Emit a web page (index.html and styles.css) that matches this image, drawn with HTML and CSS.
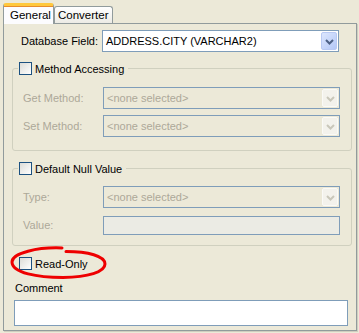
FILE: index.html
```html
<!DOCTYPE html>
<html>
<head>
<meta charset="utf-8">
<link rel="stylesheet" href="styles.css">
</head>
<body>
<div class="tabs">
  <div class="tab active">General</div>
  <div class="tab">Converter</div>
</div>
<div class="panel">
  <div class="row top-row">
    <span class="lbl wide">Database Field:</span>
    <div class="combo">
      <span class="val">ADDRESS.CITY (VARCHAR2)</span>
      <span class="btn"><svg width="9" height="6" viewBox="0 0 9 6"><path d="M1 1 L4.5 4.5 L8 1" fill="none" stroke="#4d6185" stroke-width="2"/></svg></span>
    </div>
  </div>

  <div class="group g1">
    <div class="legend"><span class="chk"></span><span>Method Accessing</span></div>
    <div class="row grow">
      <span class="lbl dis">Get Method:</span>
      <div class="combo disabled">
        <span class="val">&lt;none selected&gt;</span>
        <span class="btn"><svg width="9" height="6" viewBox="0 0 9 6"><path d="M1 1 L4.5 4.5 L8 1" fill="none" stroke="#c9c7ba" stroke-width="2"/></svg></span>
      </div>
    </div>
    <div class="row grow">
      <span class="lbl dis">Set Method:</span>
      <div class="combo disabled">
        <span class="val">&lt;none selected&gt;</span>
        <span class="btn"><svg width="9" height="6" viewBox="0 0 9 6"><path d="M1 1 L4.5 4.5 L8 1" fill="none" stroke="#c9c7ba" stroke-width="2"/></svg></span>
      </div>
    </div>
  </div>

  <div class="group g2">
    <div class="legend"><span class="chk"></span><span>Default Null Value</span></div>
    <div class="row grow">
      <span class="lbl dis">Type:</span>
      <div class="combo disabled">
        <span class="val">&lt;none selected&gt;</span>
        <span class="btn"><svg width="9" height="6" viewBox="0 0 9 6"><path d="M1 1 L4.5 4.5 L8 1" fill="none" stroke="#c9c7ba" stroke-width="2"/></svg></span>
      </div>
    </div>
    <div class="row grow">
      <span class="lbl dis">Value:</span>
      <div class="field disabled"></div>
    </div>
  </div>

  <div class="readonly">
    <span class="chk"></span><span>Read-Only</span>
    <svg class="circle" width="100" height="36" viewBox="0 0 100 36">
      <path d="M54 3 C30 2 4 8 4 17 C4 28 30 32.5 55 32.5 C80 32 97 27 97 19 C97 11 80 6.5 58 6.5" fill="none" stroke="#ee0000" stroke-width="3" stroke-linecap="round"/>
    </svg>
  </div>

  <div class="comment-lbl">Comment</div>
  <div class="textarea"></div>
</div>
</body>
</html>
```
FILE: styles.css
```css
html, body {
  margin: 0;
  padding: 0;
}
body {
  width: 359px;
  height: 333px;
  background: #ece9d8;
  font-family: "Liberation Sans", sans-serif;
  font-size: 11px;
  color: #000;
  overflow: hidden;
}
.tabs {
  display: flex;
  align-items: flex-end;
  padding: 3px 0 0 3px;
  height: 21px;
}
.tab {
  box-sizing: border-box;
  height: 17px;
  padding: 2px 3px 0 3px;
  border: 1px solid #919b9c;
  border-bottom: none;
  border-radius: 3px 3px 0 0;
  background: linear-gradient(#ffffff, #ecebe5);
  margin-bottom: 1px;
  font-size: 11.5px;
}
.tab.active {
  height: 21px;
  padding: 3px 5px 0 6px;
  background: #fcfcfe;
  border-top: 3px solid #ffc83c;
  box-shadow: inset 0 1px 0 #e68b2c;
  margin-bottom: 0;
  position: relative;
  z-index: 1;
  width: 51px;
}
.panel {
  box-sizing: border-box;
  width: 354px;
  height: 308px;
  margin-left: 3px;
  margin-top: -1px;
  border: 1px solid #919b9c;
  box-shadow: 1px 1px 0 #d0cdbf;
  background: #ece9d8;
  padding: 6px 6px 0 7px;
}
.row {
  display: flex;
  align-items: center;
}
.top-row {
  height: 22px;
  padding-left: 10px;
}
.lbl {
  width: 81px;
  flex: none;
}
.lbl.dis {
  color: #aca899;
}
.combo {
  box-sizing: border-box;
  width: 237px;
  height: 22px;
  border: 1px solid #7f9db9;
  background: #fff;
  display: flex;
  align-items: center;
  justify-content: space-between;
  padding: 1px;
}
.combo .val {
  padding-left: 2px;
}
.combo.disabled {
  background: #ece9d8;
  color: #aca899;
}
.btn {
  box-sizing: border-box;
  width: 16px;
  height: 18px;
  border: 1px solid #b9c9f3;
  border-radius: 2px;
  background: linear-gradient(135deg, #dce6fe, #b4c8f6);
  display: flex;
  align-items: center;
  justify-content: center;
  padding-top: 1px;
}
.combo.disabled .btn {
  background: #f3f2ec;
  border-color: #fafaf7;
}
.group {
  position: relative;
  box-sizing: border-box;
  width: 340px;
  margin-left: 1px;
  border: 1px solid #d0d0bf;
  border-radius: 3px;
}
.g1 {
  margin-top: 16px;
  height: 83px;
  padding: 18px 0 0 10px;
}
.g2 {
  margin-top: 17px;
  height: 78px;
  padding: 17px 0 0 10px;
}
.group .row {
  height: 22px;
  margin-bottom: 6px;
}
.group .row .lbl {
  width: 80px;
}
.legend {
  position: absolute;
  left: 5px;
  top: -8px;
  display: flex;
  align-items: center;
  background: #ece9d8;
  padding: 0 4px 0 1px;
  height: 15px;
}
.chk {
  box-sizing: border-box;
  width: 13px;
  height: 13px;
  border: 1px solid #1c5180;
  background: linear-gradient(135deg, #dcdcd7, #ffffff);
  margin-right: 3px;
  flex: none;
}
.field {
  box-sizing: border-box;
  width: 237px;
  height: 19px;
  border: 1px solid #7f9db9;
}
.field.disabled {
  background: #ebebe4;
}
.readonly {
  position: relative;
  display: flex;
  align-items: center;
  margin-top: 10px;
  padding-left: 8px;
  height: 15px;
}
.circle {
  position: absolute;
  left: -3px;
  top: -11px;
}
.comment-lbl {
  margin-top: 11px;
  padding-left: 4px;
  height: 14px;
}
.textarea {
  box-sizing: border-box;
  margin-top: 4px;
  margin-left: 3px;
  width: 334px;
  height: 26px;
  border: 1px solid #7f9db9;
  background: #fff;
}
```
